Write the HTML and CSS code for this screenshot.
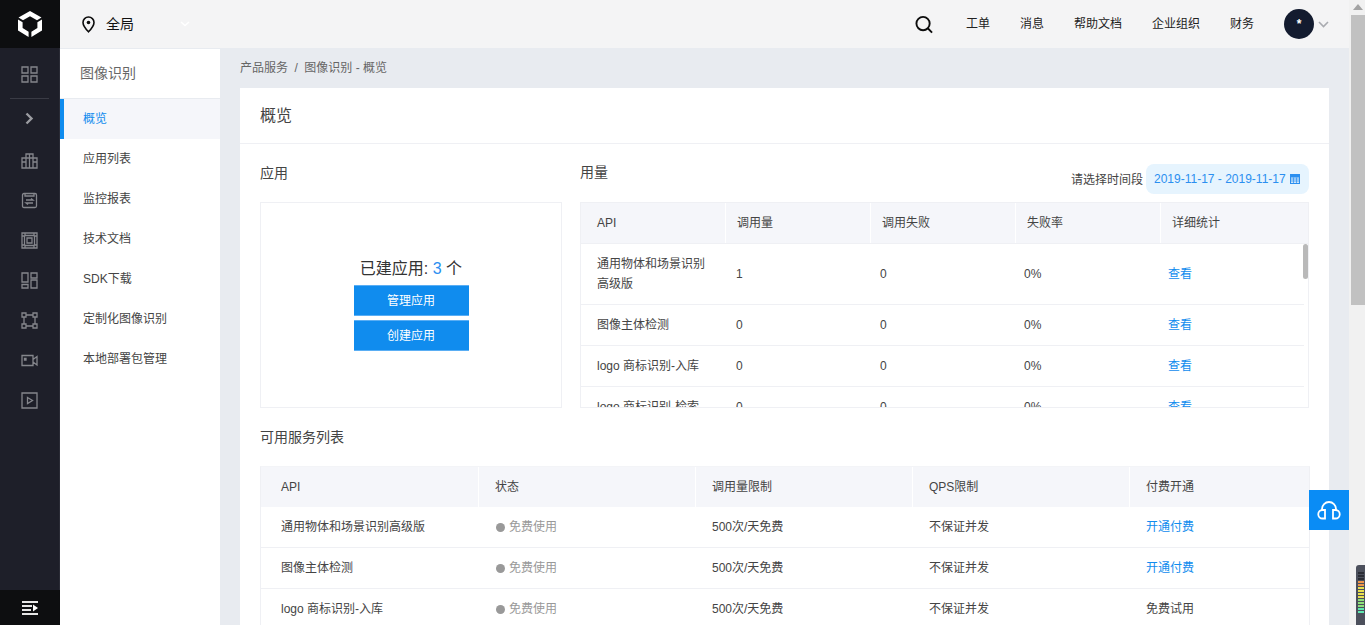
FILE: index.html
```html
<!DOCTYPE html>
<html lang="zh">
<head>
<meta charset="utf-8">
<title>图像识别 - 概览</title>
<link rel="stylesheet" href="styles.css">
</head>
<body>
<div class="app">
  <aside class="rail">
    <div class="rail-logo">
      <svg width="24" height="26" viewBox="0 0 24 26"><path d="M12 0 23.500 6.600 19 9.200 12 5.200 5 9.200 .5 6.600Z" fill="#fff"/><path d="M0 8.500V19.500L10.600 26V20.800L4.600 17V11.200Z" fill="#fff"/><path d="M24 8.500V19.500L13.400 26V20.800L19.400 17V11.200Z" fill="#fff"/></svg>
    </div>
    <nav class="rail-icons">
      <a class="rail-item"><svg class="ri" viewBox="0 0 17 17"><path d="M1 1h6v6H1zM10 1h6v6h-6zM1 10h6v6H1zM10 10h6v6h-6z"/></svg></a>
      <div class="rail-sep"></div>
      <a class="rail-item rail-toggle"><svg width="9" height="13" viewBox="0 0 9 13"><path d="M1.500 1.500 6.500 6.500l-5 5" fill="none" stroke="#9b9ca1" stroke-width="2.400"/></svg></a>
      <a class="rail-item"><svg class="ri" viewBox="0 0 17 17"><path d="M1 6h15v10H1zM5 2h7v14H5zM5 6h7M1 10h4M12 10h4M8.500 2v14"/></svg></a>
      <a class="rail-item"><svg class="ri" viewBox="0 0 17 17"><path d="M3 1.500h11c1 0 1.500.5 1.500 1.500v11c0 1-.5 1.500-1.500 1.500H3c-1 0-1.500-.5-1.500-1.500V3c0-1 .5-1.500 1.500-1.500zM4 1.500v2.500h9V1.500M5 8h7l-2-1.500M12 11H5l2 1.500"/></svg></a>
      <a class="rail-item"><svg class="ri" viewBox="0 0 17 17"><path d="M1 1h15v15H1zM1 4h2.500v9H1M16 4h-2.500v9H16M4 1v2.500h9V1M4 16v-2.500h9V16M6 6h5v5H6z"/></svg></a>
      <a class="rail-item"><svg class="ri" viewBox="0 0 17 17"><path d="M1 1h6v9H1zM10 1h6v5h-6zM10 8h6v8h-6zM1 12.500h6V16H1z"/></svg></a>
      <a class="rail-item"><svg class="ri" viewBox="0 0 17 17"><path d="M1 1h4v4H1zM12 1h4v4h-4zM1 12h4v4H1zM12 12h4v4h-4zM5 3h7M5 14h7M3 5v7M14 5v7"/></svg></a>
      <a class="rail-item"><svg class="ri" viewBox="0 0 17 17"><path d="M1 3.500h11v10H1zM12 7.500l4-3v8.500l-4-3M3.500 6.500h1.500v1.500H3.500z"/></svg></a>
      <a class="rail-item"><svg class="ri" viewBox="0 0 17 17"><path d="M1 1h15v15H1zM6.500 5.500l5 3-5 3z"/></svg></a>
    </nav>
    <div class="rail-foot">
      <svg width="16" height="14" viewBox="0 0 16 14"><path d="M0 0h16v2H0zM0 4h10v2H0zM0 8h9v2H0zM0 12h16v2H0z" fill="#e6e6e6"/><path d="M11 3.500 16 7l-5 3.500z" fill="#fff"/></svg>
    </div>
  </aside>

  <div class="main">
    <header class="topbar">
      <div class="region">
        <svg width="13" height="17" viewBox="0 0 13 17"><path d="M6.500 1C3.400 1 1 3.400 1 6.400 1 10 6.500 15.800 6.500 15.800S12 10 12 6.400C12 3.400 9.600 1 6.500 1z" fill="none" stroke="#0c0c0c" stroke-width="1.600"/><circle cx="6.500" cy="6.500" r="1.800" fill="#0c0c0c"/></svg>
        <span class="region-name">全局</span>
        <svg class="region-caret" width="10" height="6" viewBox="0 0 10 6"><path d="M1 1l4 3.500L9 1" fill="none" stroke="#fff" stroke-width="1.500"/></svg>
      </div>
      <div class="top-right">
        <svg class="search" width="18" height="19" viewBox="0 0 19 19"><circle cx="8.500" cy="8.500" r="7" fill="none" stroke="#0c0c0c" stroke-width="2"/><path d="M13.500 13.500 18 18" stroke="#0c0c0c" stroke-width="2"/></svg>
        <a class="top-link">工单</a>
        <a class="top-link">消息</a>
        <a class="top-link">帮助文档</a>
        <a class="top-link">企业组织</a>
        <a class="top-link">财务</a>
        <div class="avatar">*</div>
        <svg class="avatar-caret" width="11" height="7" viewBox="0 0 11 7"><path d="M1 1l4.500 4.500L10 1" fill="none" stroke="#a9abb0" stroke-width="1.600"/></svg>
      </div>
    </header>

    <div class="below">
      <nav class="subnav">
        <div class="subnav-title">图像识别</div>
        <a class="subnav-item is-active">概览</a>
        <a class="subnav-item">应用列表</a>
        <a class="subnav-item">监控报表</a>
        <a class="subnav-item">技术文档</a>
        <a class="subnav-item">SDK下载</a>
        <a class="subnav-item">定制化图像识别</a>
        <a class="subnav-item">本地部署包管理</a>
      </nav>

      <main class="content">
        <div class="crumbs">产品服务<span class="crumb-sep">/</span>图像识别 - 概览</div>
        <section class="card">
          <h1 class="card-title">概览</h1>
          <div class="card-body">
            <div class="top-grid">
              <div class="app-col">
                <h2 class="sec-head">应用</h2>
                <div class="app-box">
                  <div class="app-count">已建应用: <span class="num">3</span> 个</div>
                  <a class="btn">管理应用</a>
                  <a class="btn">创建应用</a>
                </div>
              </div>
              <div class="usage-col">
                <div class="usage-head">
                  <h2 class="sec-head usage-title">用量</h2>
                  <div class="date-wrap">
                    <span class="date-label">请选择时间段</span>
                    <div class="date-chip">2019-11-17 - 2019-11-17
                      <svg width="10" height="10" viewBox="0 0 10 10"><path d="M0 0h10v10H0z" fill="#2b8ff0"/><path d="M1 3.500h8v5.500H1z" fill="#cfe6fb"/><path d="M1 5h8M1 7h8M3.500 3.500V9M6.500 3.500V9" stroke="#2b8ff0" stroke-width=".7"/></svg>
                    </div>
                  </div>
                </div>
                <div class="usage-table">
                  <div class="usage-row usage-header">
                    <div class="cell first">API</div><div class="cell">调用量</div><div class="cell">调用失败</div><div class="cell">失败率</div><div class="cell">详细统计</div>
                  </div>
                  <div class="usage-body">
                    <div class="usage-row body-row"><div class="cell first">通用物体和场景识别高级版</div><div class="cell">1</div><div class="cell">0</div><div class="cell">0%</div><div class="cell"><a class="link">查看</a></div></div>
                    <div class="usage-row body-row"><div class="cell first">图像主体检测</div><div class="cell">0</div><div class="cell">0</div><div class="cell">0%</div><div class="cell"><a class="link">查看</a></div></div>
                    <div class="usage-row body-row"><div class="cell first">logo 商标识别-入库</div><div class="cell">0</div><div class="cell">0</div><div class="cell">0%</div><div class="cell"><a class="link">查看</a></div></div>
                    <div class="usage-row body-row"><div class="cell first">logo 商标识别-检索</div><div class="cell">0</div><div class="cell">0</div><div class="cell">0%</div><div class="cell"><a class="link">查看</a></div></div>
                    <div class="mini-thumb"></div>
                  </div>
                </div>
              </div>
            </div>

            <h2 class="list-head">可用服务列表</h2>
            <div class="svc-table">
              <div class="svc-row svc-header">
                <div class="svc-cell first">API</div><div class="svc-cell">状态</div><div class="svc-cell">调用量限制</div><div class="svc-cell">QPS限制</div><div class="svc-cell">付费开通</div>
              </div>
              <div class="svc-row"><div class="svc-cell first">通用物体和场景识别高级版</div><div class="svc-cell status"><i class="dot"></i>免费使用</div><div class="svc-cell">500次/天免费</div><div class="svc-cell">不保证并发</div><div class="svc-cell"><a class="link">开通付费</a></div></div>
              <div class="svc-row"><div class="svc-cell first">图像主体检测</div><div class="svc-cell status"><i class="dot"></i>免费使用</div><div class="svc-cell">500次/天免费</div><div class="svc-cell">不保证并发</div><div class="svc-cell"><a class="link">开通付费</a></div></div>
              <div class="svc-row"><div class="svc-cell first">logo 商标识别-入库</div><div class="svc-cell status"><i class="dot"></i>免费使用</div><div class="svc-cell">500次/天免费</div><div class="svc-cell">不保证并发</div><div class="svc-cell">免费试用</div></div>
            </div>
          </div>
        </section>
      </main>
    </div>
    <a class="help-btn">
      <svg width="24" height="20" viewBox="0 0 24 20"><path d="M5 10V9a7 7 0 0 1 14 0v1" fill="none" stroke="#fff" stroke-width="1.800"/><path d="M8 10v8.500H5.500a4.200 4.200 0 0 1 0-8.500zM16 10v8.500h2.500a4.200 4.200 0 0 0 0-8.500z" fill="none" stroke="#fff" stroke-width="1.800"/></svg>
    </a>
  </div>

  <div class="page-scroll">
    <svg class="scroll-up" width="10" height="6" viewBox="0 0 10 6"><path d="M5 0l5 6H0z" fill="#a3a3a3"/></svg>
    <div class="scroll-thumb"></div>
  </div>
  <div class="meter">
    <i class="m-off"></i><i class="m-off"></i><i class="m-off"></i><i class="m-o"></i><i class="m-o"></i><i class="m-y"></i><i class="m-y"></i><i class="m-y"></i><i class="m-y"></i><i class="m-g"></i><i class="m-g"></i><i class="m-g"></i><i class="m-t"></i><i class="m-t"></i>
  </div>
</div>
</body>
</html>
```

FILE: styles.css
```css
* { box-sizing: border-box; }
html, body { margin: 0; height: 100%; overflow: hidden; }
body {
  font-family: "Liberation Sans", "Noto Sans CJK SC", sans-serif;
  font-size: 12px;
  color: #333;
  background: #e8ebf0;
}
h1, h2 { margin: 0; font-weight: 400; }
a { color: inherit; text-decoration: none; }
.app { display: flex; height: 625px; position: relative; overflow: hidden; }

/* left rail */
.rail { width: 60px; flex: none; display: flex; flex-direction: column; background: #1e1f29; border-right: 1px solid #2a2b35; }
.rail-logo { height: 48px; margin-right: -1px; background: #0d0e10; display: flex; align-items: center; justify-content: center; }
.rail-icons { flex: 1; padding-top: 6px; }
.rail-item { height: 40px; display: flex; align-items: center; justify-content: center; }
.ri { width: 17px; height: 17px; fill: none; stroke: #85868c; stroke-width: 1.300; }
.rail-sep { height: 1px; margin: 4px 10px 0; background: #3a3b45; }
.rail-toggle { height: 39px; margin-bottom: 2px; }
.rail-foot { height: 35px; margin-right: -1px; background: #0d0e10; display: flex; align-items: center; justify-content: center; }

/* main */
.main { flex: 1; min-width: 0; display: flex; flex-direction: column; position: relative; }
.topbar { height: 48px; flex: none; background: #f4f4f5; display: flex; align-items: center; justify-content: space-between; padding-left: 22px; padding-right: 20px; }
.region { display: flex; align-items: center; }
.region-name { font-size: 14px; line-height: 18px; color: #111; margin-left: 11px; margin-bottom: 1px; }
.region-caret { margin-left: 46px; }
.top-right { display: flex; align-items: center; }
.search { margin-right: 33px; }
.top-link { color: #222; margin-right: 30px; line-height: 16px; margin-bottom: 1px; }
.avatar { width: 30px; height: 30px; border-radius: 50%; background: #131b2f; color: #fff; text-align: center; line-height: 30px; font-size: 12px; font-weight: 700; }
.avatar-caret { margin-left: 4px; }

.below { flex: 1; min-height: 0; display: flex; }
.subnav { width: 160px; flex: none; background: #fff; }
.subnav-title { height: 51px; border-top: 1px solid #e8ebf0; border-bottom: 1px solid #e8ebf0; padding-left: 20px; font-size: 14px; line-height: 48px; color: #666; }
.subnav-item { display: block; height: 40px; line-height: 40px; padding-left: 23px; color: #444; }
.subnav-item.is-active { background: #f5f6fa; color: #108cee; border-left: 4px solid #108cee; padding-left: 19px; }

.content { flex: 1; min-width: 0; padding: 0 20px; overflow: hidden; }
.crumbs { height: 40px; line-height: 40px; color: #666; }
.crumb-sep { margin: 0 6.500px; }
.card { background: #fff; }
.card-title { height: 56px; border-bottom: 1px solid #eff0f4; padding-left: 20px; font-size: 16px; line-height: 55px; color: #444; }
.card-body { padding: 20px 20px 0; }

.top-grid { display: grid; grid-template-columns: 302px 729px; column-gap: 18px; }
.sec-head { font-size: 14px; line-height: 18px; color: #444; height: 38px; }
.usage-title { line-height: 16px; }
.app-box { height: 206px; padding-bottom: 2px; border: 1px solid #eff0f4; display: flex; flex-direction: column; align-items: center; justify-content: center; }
.app-count { font-size: 16px; line-height: 22px; color: #333; margin-bottom: 5px; }
.num { color: #2b8ff0; }
.btn { width: 115px; height: 31px; margin-bottom: 4px; background: #108cee; border-top: 1px solid #5aaef4; border-bottom: 1px solid #5aaef4; color: #fff; text-align: center; line-height: 30px; }
.btn:last-child { margin-bottom: 0; line-height: 31px; }

.usage-head { display: flex; justify-content: space-between; }
.date-wrap { display: flex; align-items: center; height: 30px; }
.date-label { color: #444; margin-right: 3px; margin-bottom: 1px; }
.date-chip { width: 163px; height: 30px; border-radius: 8px; background: #e6f4fe; color: #2b8ff0; display: flex; align-items: center; justify-content: space-between; padding: 0 9px 0 8px; }
.usage-table { height: 206px; border: 1px solid #eff0f4; overflow: hidden; }
.usage-row { display: grid; grid-template-columns: repeat(5, 145px); }
.usage-header { background: #f5f6fa; height: 41px; border-bottom: 1px solid #eff0f4; }
.usage-header .cell { line-height: 40px; padding-left: 11px; border-right: 1px solid #fff; color: #444; }
.usage-header .cell:first-child { padding-left: 16px; }
.usage-header .cell:last-child { border-right: 0; }
.usage-body { position: relative; height: 163px; overflow: hidden; }
.body-row { grid-template-columns: repeat(5, 144px); width: 723px; align-items: center; height: 41px; border-bottom: 1px solid #eff0f4; color: #444; }
.body-row:first-child { height: 61px; }
.body-row .cell { padding: 0 11px; line-height: 20px; }
.body-row .cell:first-child { padding: 0 12px 0 16px; }
.mini-thumb { position: absolute; right: 0; top: 0; width: 5px; height: 35px; border-radius: 3px; background: #b9b9b9; }
.link { color: #108cee; }

.list-head { font-size: 14px; line-height: 58px; height: 58px; color: #444; }
.svc-table { border-left: 1px solid #eff0f4; border-right: 1px solid #eff0f4; border-top: 1px solid #f3f4f7; width: 1050px; }
.svc-row { display: grid; grid-template-columns: 218px 217px 217px 217px 179px; height: 41px; border-bottom: 1px solid #eff0f4; }
.svc-header { background: #f5f6fa; height: 40px; border-bottom: 0; }
.svc-cell { line-height: 40px; padding-left: 16px; color: #444; }
.svc-cell.first { padding-left: 20px; }
.svc-header .svc-cell { border-right: 1px solid #fff; }
.svc-header .svc-cell:last-child { border-right: 0; }
.status { color: #999; display: flex; align-items: center; padding-left: 17px; }
.dot { width: 9px; height: 9px; border-radius: 50%; background: #999; margin-right: 4px; }

.help-btn { position: absolute; right: 0; top: 490px; width: 40px; height: 40px; background: #0a8cf5; display: flex; align-items: center; justify-content: center; }

.page-scroll { width: 16px; flex: none; background: #f1f1f1; padding: 15px 0 0 2px; position: relative; }
.scroll-up { position: absolute; left: 4px; top: 4px; }
.scroll-thumb { height: 290px; background: #c1c1c1; }
.meter { position: absolute; right: 0; top: 565px; width: 9px; height: 60px; background: #4c505c; border-radius: 3px 0 0 0; padding: 7px 1px 0 2px; display: flex; flex-direction: column; gap: 1px; }
.meter i { display: block; height: 2px; flex: none; }
.m-off { background: #2b2d35; }
.m-o { background: #f0964a; }
.m-y { background: #e9e04f; }
.m-g { background: #8ee07a; }
.m-t { background: #5fe8b0; }
```
